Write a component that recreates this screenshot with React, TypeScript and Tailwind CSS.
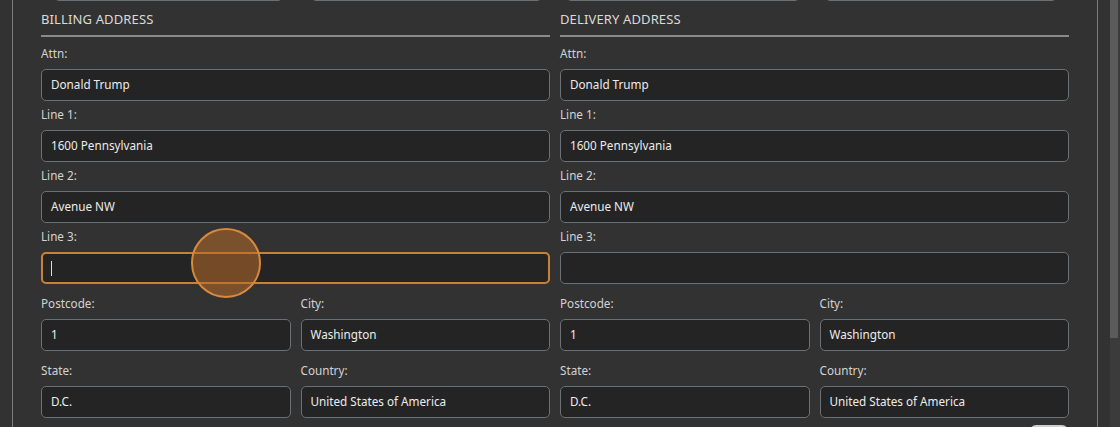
const billing = {
  attn: "Donald Trump",
  line1: "1600 Pennsylvania",
  line2: "Avenue NW",
  line3: "",
  postcode: "1",
  city: "Washington",
  state: "D.C.",
  country: "United States of America",
};

function Field({
  label,
  value,
  focused = false,
  className = "",
}: {
  label: string;
  value: string;
  focused?: boolean;
  className?: string;
}) {
  return (
    <div className={className}>
      <div className="h-4 text-[11.7px] leading-4 text-[#d2d2d2]">{label}</div>
      <div
        className={`mt-2 flex h-8 items-center rounded-[5px] bg-[#242424] text-[11.7px] text-[#ececec] ${
          focused ? "border-2 border-[#c98234] px-[8px]" : "border border-[#6b7075] px-[9px]"
        }`}
      >
        {focused ? <span className="h-[15px] w-px bg-[#dcdcdc]" /> : value}
      </div>
    </div>
  );
}

function Address({ title, focusLine3 = false }: { title: string; focusLine3?: boolean }) {
  return (
    <div className="flex flex-col">
      <div className="border-b-2 border-[#8a8a8a] pb-[8px] text-[13px] leading-4 tracking-[0.01em] text-[#dadada]">
        {title}
      </div>
      <Field className="mt-[8px]" label="Attn:" value={billing.attn} />
      <Field className="mt-[5px]" label="Line 1:" value={billing.line1} />
      <Field className="mt-[5px]" label="Line 2:" value={billing.line2} />
      <div className="relative">
        <Field className="mt-[5px]" label="Line 3:" value={billing.line3} focused={focusLine3} />
        {focusLine3 && (
          <div className="absolute left-[150px] top-[5px] h-[70px] w-[70px] rounded-full border-2 border-[#d68a3e] bg-[#b8692a]/55" />
        )}
      </div>
      <div className="mt-[11px] grid grid-cols-2 gap-x-[10px]">
        <Field label="Postcode:" value={billing.postcode} />
        <Field label="City:" value={billing.city} />
      </div>
      <div className="mt-[11px] grid grid-cols-2 gap-x-[10px]">
        <Field label="State:" value={billing.state} />
        <Field label="Country:" value={billing.country} />
      </div>
    </div>
  );
}

export default function App() {
  return (
    <div
      className="flex h-[427px] w-[1120px] overflow-hidden bg-[#323232]"
      style={{ fontFamily: '"Noto Sans", "Open Sans", sans-serif' }}
    >
      <div className="w-3 shrink-0" />
      <div className="flex w-[1086px] shrink-0 flex-col border-x border-[#7c7c7c] pl-[28px] pr-[28px]">
        <div className="-mt-[30px] flex h-[31px] shrink-0">
          <div className="ml-[13px] w-[229px] rounded-[5px] border border-[#6b7075] bg-[#242424]" />
          <div className="ml-[28px] w-[231px] rounded-[5px] border border-[#6b7075] bg-[#242424]" />
          <div className="ml-[24px] w-[234px] rounded-[5px] border border-[#6b7075] bg-[#242424]" />
          <div className="ml-[25px] w-[232px] rounded-[5px] border border-[#6b7075] bg-[#242424]" />
        </div>
        <div className="mt-[10px] grid grid-cols-2 gap-x-[10px]">
          <Address title="BILLING ADDRESS" focusLine3 />
          <Address title="DELIVERY ADDRESS" />
        </div>
        <div className="mt-[7px] flex justify-end pr-[1px]">
          <div className="h-8 w-[38px] rounded-md border-2 border-[#cfcfcf] bg-[#3a3a3a]" />
        </div>
      </div>
      <div className="w-3 shrink-0" />
      <div className="flex w-[10px] shrink-0 flex-col bg-[#3b3b3b]">
        <div className="h-[338px] w-2 bg-[#5b5b5b]" />
      </div>
    </div>
  );
}
